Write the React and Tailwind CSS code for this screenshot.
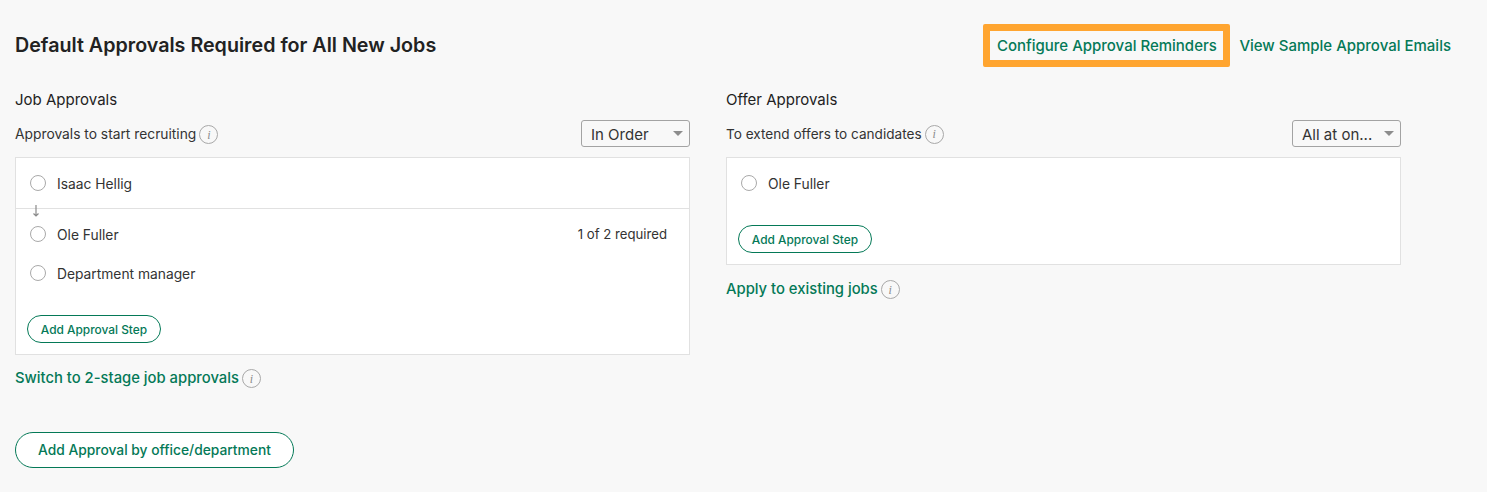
import { useState } from "react";

const FONT = "font-['Inter','Liberation_Sans',sans-serif]";

function InfoIcon() {
  return (
    <span className="inline-flex w-[19px] h-[19px] mt-[2px] rounded-full border border-[#a8a8a8] items-center justify-center text-[12px] italic text-[#8a8a8a] font-['Liberation_Serif',serif] flex-shrink-0">
      i
    </span>
  );
}

function Radio() {
  return <span className="block w-4 h-4 rounded-full border border-[#a9a9a9] bg-white flex-shrink-0" />;
}

function Approver({ name, note, className = "" }) {
  return (
    <div className={`flex items-center pl-[14px] pr-[22px] ${className}`}>
      <Radio />
      <span className="ml-[11px] pt-[2px] text-[13.8px] text-[#333]">{name}</span>
      {note && <span className="ml-auto pt-[2px] text-[13.2px] text-[#333]">{note}</span>}
    </div>
  );
}

function StepButton() {
  return (
    <button className="h-[28px] w-[134px] pt-[1px] rounded-full border border-[#047957] bg-white text-[11.9px] font-medium text-[#047957]">
      Add Approval Step
    </button>
  );
}

function Select({ label }) {
  return (
    <div className="w-[109px] h-[27px] rounded-[3px] border border-[#a3a3a3] bg-[#f8f8f8] flex items-center pl-[9px] pr-[6px]">
      <span className="pt-[3px] text-[15px] text-[#333]">{label}</span>
      <span className="ml-auto w-0 h-0 border-x-[5px] border-x-transparent border-t-[5px] border-t-[#8c8c8c]" />
    </div>
  );
}

function SectionHead({ title, sub, subSize, select }) {
  return (
    <>
      <h3 className="h-[20px] leading-[20px] text-[15px] text-[#222]">{title}</h3>
      <div className="mt-[10px] h-[27px] flex items-center justify-between mb-[10px]">
        <div className={`flex items-center gap-[3px] text-[#333] ${subSize}`}>
          <span className="pt-[1px]">{sub}</span>
          <InfoIcon />
        </div>
        <Select label={select} />
      </div>
    </>
  );
}

function GreenLink({ children }) {
  return (
    <div className="flex items-center gap-[3px]">
      <a className="pt-[1px] text-[14.8px] font-medium text-[#047957]">{children}</a>
      <InfoIcon />
    </div>
  );
}

export default function App() {
  const [sel] = useState({ job: "In Order", offer: "All at on..." });

  return (
    <div className={`${FONT} min-h-[492px] bg-[#f8f8f8] pl-[15px] pt-[24px] pb-[23px]`}>
      <div className="flex items-center h-[43px]">
        <h1 className="text-[19.7px] font-semibold text-[#222]">Default Approvals Required for All New Jobs</h1>
        <div className="ml-auto flex items-center pr-[36px]">
          <a className="h-[43px] w-[247px] pt-[1px] rounded-[2px] border-[7px] border-[#ffa530] flex items-center justify-center text-[15px] font-medium text-[#047957]">
            Configure Approval Reminders
          </a>
          <a className="ml-[9px] pt-[1px] text-[15px] font-medium text-[#047957]">View Sample Approval Emails</a>
        </div>
      </div>

      <div className="mt-[23px] flex items-start gap-[36px]">
        <div className="w-[675px]">
          <SectionHead title="Job Approvals" sub="Approvals to start recruiting" subSize="text-[13.8px]" select={sel.job} />
          <div className="h-[198px] border border-[#e1e1e1] bg-white">
            <Approver name="Isaac Hellig" className="h-[51px] border-b border-[#e1e1e1]" />
            <div className="relative">
              <span className="absolute left-[14px] -top-[5px] text-[#8a8a8a]">
                <svg width="12" height="14" viewBox="0 0 12 14" fill="none" stroke="currentColor" strokeWidth="1.2">
                  <path d="M6 1v11M3.5 9.5 6 12l2.5-2.5" />
                </svg>
              </span>
            </div>
            <Approver name="Ole Fuller" note="1 of 2 required" className="h-[50px]" />
            <Approver name="Department manager" className="h-[28px]" />
            <div className="pl-[11px] pt-[28px]">
              <StepButton />
            </div>
          </div>
          <div className="mt-[11px]">
            <GreenLink>Switch to 2-stage job approvals</GreenLink>
          </div>
        </div>

        <div className="w-[675px]">
          <SectionHead title="Offer Approvals" sub="To extend offers to candidates" subSize="text-[13.6px]" select={sel.offer} />
          <div className="h-[108px] border border-[#e1e1e1] bg-white">
            <Approver name="Ole Fuller" className="h-[50px]" />
            <div className="pl-[11px] pt-[17px]">
              <StepButton />
            </div>
          </div>
          <div className="mt-[12px]">
            <GreenLink>Apply to existing jobs</GreenLink>
          </div>
        </div>
      </div>

      <button className="mt-[43px] h-[36px] w-[279px] pt-[1px] rounded-full border border-[#047957] bg-white text-[13.8px] font-medium text-[#047957]">
        Add Approval by office/department
      </button>
    </div>
  );
}
